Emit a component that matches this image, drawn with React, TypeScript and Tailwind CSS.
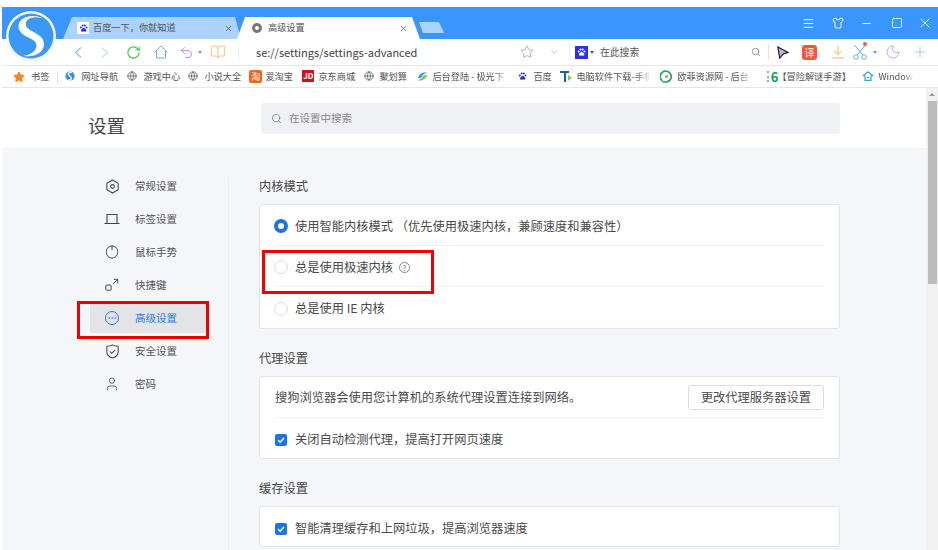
import React from 'react';
import {
  BookOpen,
  ChevronDown,
  Globe,
  Menu,
  Minus,
  Moon,
  MoreHorizontal,
  Plus,
  RotateCw,
  Search,
  Shirt,
  Square,
  Star,
  Undo2,
  User,
  X,
} from 'lucide-react';

const font = "font-['Noto_Sans_CJK_SC','Noto_Sans',sans-serif]";
const fade = '[mask-image:linear-gradient(to_right,#000_82%,transparent)]';

const Paw = ({ className }: { className: string }) => (
  <svg viewBox="0 0 12 12" className={className}>
    <circle cx="3" cy="5" r="1.1" fill="currentColor" />
    <circle cx="5" cy="2.8" r="1.1" fill="currentColor" />
    <circle cx="7.4" cy="2.8" r="1.1" fill="currentColor" />
    <circle cx="9.3" cy="5" r="1.1" fill="currentColor" />
    <path d="M6.2 5.2c1.2 0 1.6 1.3 2.5 2 .9.8.4 2.4-1 2.4-.6 0-1-.2-1.500-.2s-1 .2-1.600.2c-1.400 0-1.800-1.600-.9-2.400.9-.7 1.200-2 2.500-2z" fill="currentColor" />
  </svg>
);

const Logo = () => (
  <svg viewBox="0 0 50 50" className="w-[50px] h-[50px]">
    <circle cx="25" cy="25" r="25" fill="#f4f6f8" />
    <circle cx="25" cy="25" r="22.5" fill="#3c98f5" />
    <path
      d="M37 7.500C27 2.500 13 5.500 12.500 15c-.4 8 9 10.500 14.500 14 5 3.200 4.500 9-.5 12.500-3 2-6 3-9 3.300 9 2 20-2 20.500-11.300.4-8-8.500-11-14-14.500-5-3.200-5.500-7.500-2-10.500 3.500-2.800 9-3 15-1z"
      fill="#fff"
    />
  </svg>
);

const bookmarks = [
  { name: '网址导航', width: 'w-[62px]', icon: <svg viewBox="0 0 12 12" className="w-[10px] h-[10px] mr-[6px] shrink-0"><circle cx="6" cy="6" r="5.500" fill="#2f8fe8" /><path d="M8.500 1.500C5 1 3 3 4.500 5s4 2 3 4.500c-.5 1-2 1.500-3.500 1" stroke="#fff" strokeWidth="1.600" fill="none" /></svg> },
  { name: '游戏中心', width: 'w-[61px]', icon: <Globe className="w-[10px] h-[10px] mr-[6px] shrink-0 text-[#666]" /> },
  { name: '小说大全', width: 'w-[61px]', icon: <Globe className="w-[10px] h-[10px] mr-[6px] shrink-0 text-[#666]" /> },
  { name: '爱淘宝', width: 'w-[53px]', icon: <span className="w-[13px] h-[13px] mr-[3px] shrink-0 rounded-[2px] bg-[#f4641c] text-white text-[9px] leading-[13px] text-center">淘</span> },
  { name: '京东商城', width: 'w-[62px]', icon: <span className="w-[12px] h-[12px] mr-[4px] shrink-0 bg-[#c9151e] text-white text-[8px] font-bold leading-[12px] text-center">JD</span> },
  { name: '聚划算', width: 'w-[53px]', icon: <Globe className="w-[10px] h-[10px] mr-[5px] shrink-0 text-[#666]" /> },
  { name: '后台登陆 - 极光下', width: `w-[94px] mr-[6px] ${fade}`, icon: <svg viewBox="0 0 12 12" className="w-[11px] h-[11px] mr-[4px] shrink-0"><path d="M1 8C2 3 7 1 11 2 8 3 6 4 5 7z" fill="#2f9be8" /><path d="M11 4C10 9 5 11 1 10c3-1 5-2 6-5z" fill="#7cc243" /></svg> },
  { name: '百度', width: 'w-[43px]', icon: <Paw className="w-[11px] h-[11px] mr-[5px] shrink-0 text-[#2932e1]" /> },
  { name: '电脑软件下载-手机', width: `w-[92px] mr-[8px] ${fade}`, icon: <svg viewBox="0 0 13 13" className="w-[13px] h-[13px] mr-[3px] shrink-0"><path d="M0 1h9v2H6v9H4V3H0z" fill="#0d6f8e" /><path d="M8 5l4 3-4 3z" fill="#8cc63f" /></svg> },
  { name: '欧菲资源网 - 后台', width: `w-[94px] mr-[8px] ${fade}`, icon: <svg viewBox="0 0 13 13" className="w-[13px] h-[13px] mr-[4px] shrink-0"><path d="M2.500 11A5.500 5.500 0 1 1 6.500 12H2.500" stroke="#11a36b" strokeWidth="1.600" fill="none" /><circle cx="6.500" cy="6.500" r="1.500" fill="#f08a24" /></svg> },
  { name: '【冒险解谜手游】', width: 'w-[100px]', icon: <span className="w-[16px] -mr-[1px] shrink-0 flex items-center justify-end"><span className="w-[3px] h-[11px] mr-[1px] border-l-2 border-dotted border-[#6bb7ea]" /><span className="text-[#16a05d] text-[13px] font-bold leading-[13px]">6</span></span> },
  { name: 'Windows', width: `w-[52px] ${fade}`, icon: <svg viewBox="0 0 14 14" fill="none" stroke="#35a5d6" strokeWidth="1.400" className="w-[12px] h-[12px] mr-[4px] shrink-0"><path d="M1 7l6-5 6 5M3.500 6v6h7V6M5.500 9h3" /></svg> },
];

const CoreIcon = () => (
  <svg viewBox="0 0 16 16" fill="none" stroke="#444" strokeWidth="1.100" className="w-[15px] h-[15px]">
    <path d="M8 1l6 3.500v7L8 15l-6-3.500v-7z" />
    <circle cx="8" cy="8" r="2" />
  </svg>
);
const TabIcon = () => (
  <svg viewBox="0 0 16 16" fill="none" stroke="#444" strokeWidth="1.100" className="w-[16px] h-[16px]">
    <path d="M3 3.500h10v9H3zM.5 12.500h15" />
  </svg>
);
const MouseIcon = () => (
  <svg viewBox="0 0 16 16" fill="none" stroke="#444" strokeWidth="1.100" className="w-[14px] h-[14px]">
    <rect x="1.500" y="1" width="13" height="14" rx="6.500" />
    <path d="M8 1v5" />
  </svg>
);
const KeyIcon = () => (
  <svg viewBox="0 0 16 16" fill="none" stroke="#444" strokeWidth="1.100" className="w-[14px] h-[14px]">
    <rect x="1" y="8" width="6" height="6" rx="1" />
    <path d="M9 7l5.500-5.500M10 1.500h4.500V6" />
  </svg>
);
const ShieldIcon = () => (
  <svg viewBox="0 0 16 16" fill="none" stroke="#444" strokeWidth="1.100" className="w-[15px] h-[15px]">
    <path d="M2 2.500C5 2.500 6.500 2 8 1c1.500 1 3 1.500 6 1.500v6c0 3-3 5.500-6 6.500-3-1-6-3.500-6-6.500z" />
    <path d="M5.200 8l2 2 3.600-3.500" />
  </svg>
);

const navItems = [
  { label: '常规设置', icon: <CoreIcon /> },
  { label: '标签设置', icon: <TabIcon /> },
  { label: '鼠标手势', icon: <MouseIcon /> },
  { label: '快捷键', icon: <KeyIcon /> },
  { label: '高级设置', icon: <span className="w-[14px] h-[14px] rounded-full border border-[#2f7de1] flex items-center justify-center"><MoreHorizontal className="w-[10px] h-[10px] text-[#2f7de1]" strokeWidth={1.5} /></span>, active: true },
  { label: '安全设置', icon: <ShieldIcon /> },
  { label: '密码', icon: <User className="w-[16px] h-[16px] text-[#444]" strokeWidth={1.2} /> },
];

const Radio = ({ checked = false }: { checked?: boolean }) =>
  checked ? (
    <span className="w-[14px] h-[14px] -ml-px rounded-full border-[4px] border-[#1a73e8] bg-white" />
  ) : (
    <span className="w-[14px] h-[14px] -ml-px rounded-full border border-[#dadce0] bg-white" />
  );

const Checkbox = () => (
  <span className="w-[12px] h-[12px] rounded-[2px] bg-[#1a73e8] flex items-center justify-center">
    <svg viewBox="0 0 12 12" className="w-[10px] h-[10px]" fill="none" stroke="#fff" strokeWidth="1.800">
      <path d="M2.500 6.200l2.500 2.500 4.500-5" />
    </svg>
  </span>
);

const SectionTitle = ({ children }: { children: React.ReactNode }) => (
  <h2 className="h-[18px] mb-[9px] text-[12.25px] leading-[18px] text-[#444]">{children}</h2>
);

const Row = ({ children, line = false, flush = false }: { children: React.ReactNode; line?: boolean; flush?: boolean }) => (
  <div className={`h-[41px] flex items-center text-[12.25px] text-[#4a4a4a] ${line ? 'border-b border-[#eeeff2]' : ''} ${flush ? '' : 'pt-[2px]'}`}>
    {children}
  </div>
);

export default function App() {
  return (
    <div className={`relative w-[938px] h-[550px] overflow-hidden bg-white pt-[7px] pl-[2px] flex flex-col ${font}`}>
      {/* title bar */}
      <div className="h-[32px] shrink-0 bg-[#3996ff] flex items-end pl-[61px]">
        <div className="w-[178px] h-[22px] bg-[#acd2ff] [clip-path:polygon(9px_0,172px_0,178px_100%,0_100%)] flex items-center pl-[14px] pr-[8px] text-[9.2px] text-[#555]">
          <span className="w-[12px] h-[12px] bg-white flex items-center justify-center mr-[4px]">
            <Paw className="w-[11px] h-[11px] text-[#2932e1]" />
          </span>
          <span>百度一下，你就知道</span>
          <X className="ml-auto w-[9px] h-[9px] text-[#555]" />
        </div>
        <div className="w-[183px] h-[22px] -ml-[4px] bg-white [clip-path:polygon(8px_0,175px_0,183px_100%,0_100%)] flex items-center pl-[15px] pr-[12px] text-[9.2px] text-[#555]">
          <span className="w-[10px] h-[10px] rounded-full border-[3px] border-[#777] mr-[6px]" />
          <span>高级设置</span>
          <X className="ml-auto w-[9px] h-[9px] text-[#555]" />
        </div>
        <div className="w-[25px] h-[11px] mb-[6px] -ml-px bg-[#acd2ff] [clip-path:polygon(0_0,20px_0,25px_100%,4px_100%)]" />
        <div className="ml-auto h-full flex items-center pr-[5px] text-white">
          <Menu className="w-[13px] h-[13px] mr-[17px]" strokeWidth={1.8} />
          <Shirt className="w-[12px] h-[12px] mr-[16px]" strokeWidth={1.8} />
          <Minus className="w-[13px] h-[13px] mr-[18px]" strokeWidth={1.8} />
          <Square className="w-[12px] h-[12px] mr-[14px]" strokeWidth={1.8} />
          <X className="w-[16px] h-[16px]" strokeWidth={1.4} />
        </div>
      </div>

      {/* toolbar */}
      <div className="h-[26px] shrink-0 flex items-center border-b border-[#e6e6e6] box-content">
        <div className="w-[72px]" />
        <svg viewBox="0 0 8 11" fill="none" stroke="#86bdf8" strokeWidth="1.100" className="w-[8px] h-[11px]"><path d="M7 .5L1.500 5.500 7 10.500" /></svg>
        <svg viewBox="0 0 8 11" fill="none" stroke="#c6dffa" strokeWidth="1.100" className="w-[8px] h-[11px] ml-[19px]"><path d="M1 .5l5.500 5L1 10.500" /></svg>
        <RotateCw className="w-[15px] h-[15px] ml-[17px] text-[#4cc34a]" strokeWidth={1.8} />
        <svg viewBox="0 0 14 14" fill="none" stroke="#6aaef5" strokeWidth="1" className="w-[14px] h-[14px] ml-[13px]"><path d="M.5 7.500L7 1l6.500 6.500M2.500 6v7h9V6" /></svg>
        <Undo2 className="w-[15px] h-[15px] ml-[11px] text-[#c386f0]" strokeWidth={1.6} />
        <span className="ml-[4px] w-0 h-0 border-x-[2px] border-x-transparent border-t-[3px] border-t-[#5b9df0]" />
        <BookOpen className="w-[16px] h-[16px] ml-[8px] text-[#f8c07a]" strokeWidth={1.4} />
        <div className="w-px h-[16px] bg-[#ececec] ml-[12px]" />
        <span className="ml-[17px] w-[264px] text-[11px] text-[#444]">se://settings/settings-advanced</span>
        <Star className="w-[14px] h-[14px] text-[#999]" strokeWidth={1.3} />
        <ChevronDown className="w-[10px] h-[10px] ml-[15px] text-[#999]" strokeWidth={1.4} />
        <div className="w-px h-[16px] bg-[#ececec] ml-[10px]" />
        <span className="ml-[5px] w-[13px] h-[13px] bg-[#2932e1] flex items-center justify-center">
          <Paw className="w-[11px] h-[11px] text-white" />
        </span>
        <span className="ml-[2px] w-0 h-0 border-x-[2px] border-x-transparent border-t-[3px] border-t-[#555]" />
        <span className="ml-[6px] w-[151px] text-[9.8px] text-[#555]">在此搜索</span>
        <Search className="w-[10px] h-[10px] text-[#888]" />
        <div className="w-px h-[16px] bg-[#e4e4e4] ml-[7px]" />
        <svg viewBox="0 0 14 14" className="w-[13px] h-[13px] ml-[7px]">
          <path d="M2 1l11 6-5 1.500L4 13z" fill="#c9a8f5" stroke="#222" strokeWidth="1.300" />
        </svg>
        <span className="ml-[13px] w-[15px] h-[15px] rounded-[3px] bg-[#f4553c] text-white text-[10px] leading-[15px] text-center">译</span>
        <svg viewBox="0 0 14 14" fill="none" stroke="#f8b14f" strokeWidth="1" className="w-[14px] h-[14px] ml-[14px]">
          <path d="M7 1v8M3 5.500l4 4 4-4M1 13h12" />
        </svg>
        <span className="relative ml-[8px]">
          <svg viewBox="0 0 14 16" fill="none" stroke="#6aa9f4" strokeWidth="1" className="block w-[14px] h-[16px]">
            <circle cx="3" cy="13" r="2.300" />
            <circle cx="11" cy="13" r="2.300" />
            <path d="M4.300 11L12.500 1M9.700 11L1.500 1" />
          </svg>
          <span className="absolute -top-[2px] right-[0px] w-[4px] h-[4px] rounded-full bg-[#f0594a]" />
        </span>
        <span className="ml-[6px] w-0 h-0 border-x-[2px] border-x-transparent border-t-[3px] border-t-[#5b9df0]" />
        <Moon className="w-[16px] h-[16px] ml-[8px] text-[#c58cf2]" strokeWidth={1.3} />
        <Plus className="w-[16px] h-[16px] ml-[11px] text-[#8fc2f8]" strokeWidth={1.2} />
      </div>

      {/* bookmarks */}
      <div className="h-[21px] shrink-0 flex items-center border-b border-[#e6e6e6] box-content text-[9.2px] text-[#555] overflow-hidden whitespace-nowrap">
        <Star className="w-[12px] h-[12px] ml-[11px] text-[#f5851f]" fill="#f5851f" />
        <span className="ml-[6px]">书签</span>
        <div className="w-px h-[12px] bg-[#e0e0e0] ml-[8px] mr-[7px]" />
        {bookmarks.map((b) => (
          <div key={b.name} className={`${b.width} shrink-0 flex items-center overflow-hidden`}>
            {b.icon}
            <span>{b.name}</span>
          </div>
        ))}
      </div>

      {/* settings page */}
      <div className="flex-1 min-h-0 flex">
        <div className="flex-1 min-w-0 flex flex-col">
          <header className="h-[61px] shrink-0 bg-white border-b border-[#eeeff2] flex items-center">
            <h1 className="ml-[86px] mt-[16px] w-[173px] text-[18.500px] text-[#444]">设置</h1>
            <div className="w-[579px] h-[31px] rounded-[3px] bg-[#f0f1f5] flex items-center pl-[10px] text-[10.5px] text-[#888]">
              <Search className="w-[11px] h-[11px] mr-[7px]" />
              在设置中搜索
            </div>
          </header>
          <div className="flex-1 min-h-0 bg-[#f5f6fa] flex overflow-hidden">
            <nav className="w-[226px] shrink-0 pt-[22px] pl-[88px]">
              {navItems.map((item) => (
                <div
                  key={item.label}
                  className={`w-[118px] h-[30px] mb-[3px] flex items-center text-[10.5px] ${item.active ? 'bg-[#e3e4e7] rounded-[3px] text-[#2f7de1]' : 'text-[#555]'}`}
                >
                  <span className="w-[16px] h-[16px] ml-[14px] mr-[15px] flex items-center justify-center">{item.icon}</span>
                  {item.label}
                </div>
              ))}
            </nav>
            <div className="w-px mt-[28px] bg-[#eceef2]" />
            <main className="w-[581px] ml-[30px] pt-[28px]">
              <SectionTitle>内核模式</SectionTitle>
              <section className="h-[125px] bg-white rounded-[3px] border border-[#e2e4e9] px-[15px]">
                <Row line>
                  <Radio checked />
                  <span className="ml-[7px]">使用智能内核模式 （优先使用极速内核，兼顾速度和兼容性）</span>
                </Row>
                <Row line>
                  <Radio />
                  <span className="ml-[7px]">总是使用极速内核</span>
                  <span className="ml-[6px] w-[11px] h-[11px] rounded-full border border-[#888] text-[8px] leading-[9px] text-center text-[#777]">?</span>
                </Row>
                <Row>
                  <Radio />
                  <span className="ml-[7px]">总是使用 IE 内核</span>
                </Row>
              </section>

              <div className="mt-[20px]">
                <SectionTitle>代理设置</SectionTitle>
              </div>
              <section className="h-[83px] bg-white rounded-[3px] border border-[#e2e4e9] px-[15px]">
                <Row line flush>
                  <span>搜狗浏览器会使用您计算机的系统代理设置连接到网络。</span>
                  <button className="ml-auto w-[136px] h-[25px] rounded-[3px] border border-[#dcdee3] bg-white text-[12.25px] text-[#4a4a4a]">更改代理服务器设置</button>
                </Row>
                <Row>
                  <Checkbox />
                  <span className="ml-[8px]">关闭自动检测代理，提高打开网页速度</span>
                </Row>
              </section>

              <div className="mt-[20px]">
                <SectionTitle>缓存设置</SectionTitle>
              </div>
              <section className="h-[41px] bg-white rounded-[3px] border border-[#e2e4e9] px-[15px]">
                <Row>
                  <Checkbox />
                  <span className="ml-[8px]">智能清理缓存和上网垃圾，提高浏览器速度</span>
                </Row>
              </section>
            </main>
          </div>
        </div>

        {/* scrollbar */}
        <div className="w-[12px] shrink-0 bg-[#f1f1f1] flex flex-col items-center">
          <div className="h-[13px] flex items-center">
            <span className="w-0 h-0 border-x-[3px] border-x-transparent border-b-[3px] border-b-[#999]" />
          </div>
          <div className="w-[9px] h-[183px] bg-[#bcbcbc]" />
        </div>
      </div>

      {/* logo overlaps the title bar and toolbar */}
      <div className="absolute left-[6px] top-[11px]">
        <Logo />
      </div>

      {/* red annotation boxes */}
      <div className="absolute left-[77px] top-[301px] w-[132px] h-[38px] border-[3px] border-[#f00000]" />
      <div className="absolute left-[262px] top-[250px] w-[172px] h-[44px] border-[3px] border-[#f00000]" />
    </div>
  );
}
